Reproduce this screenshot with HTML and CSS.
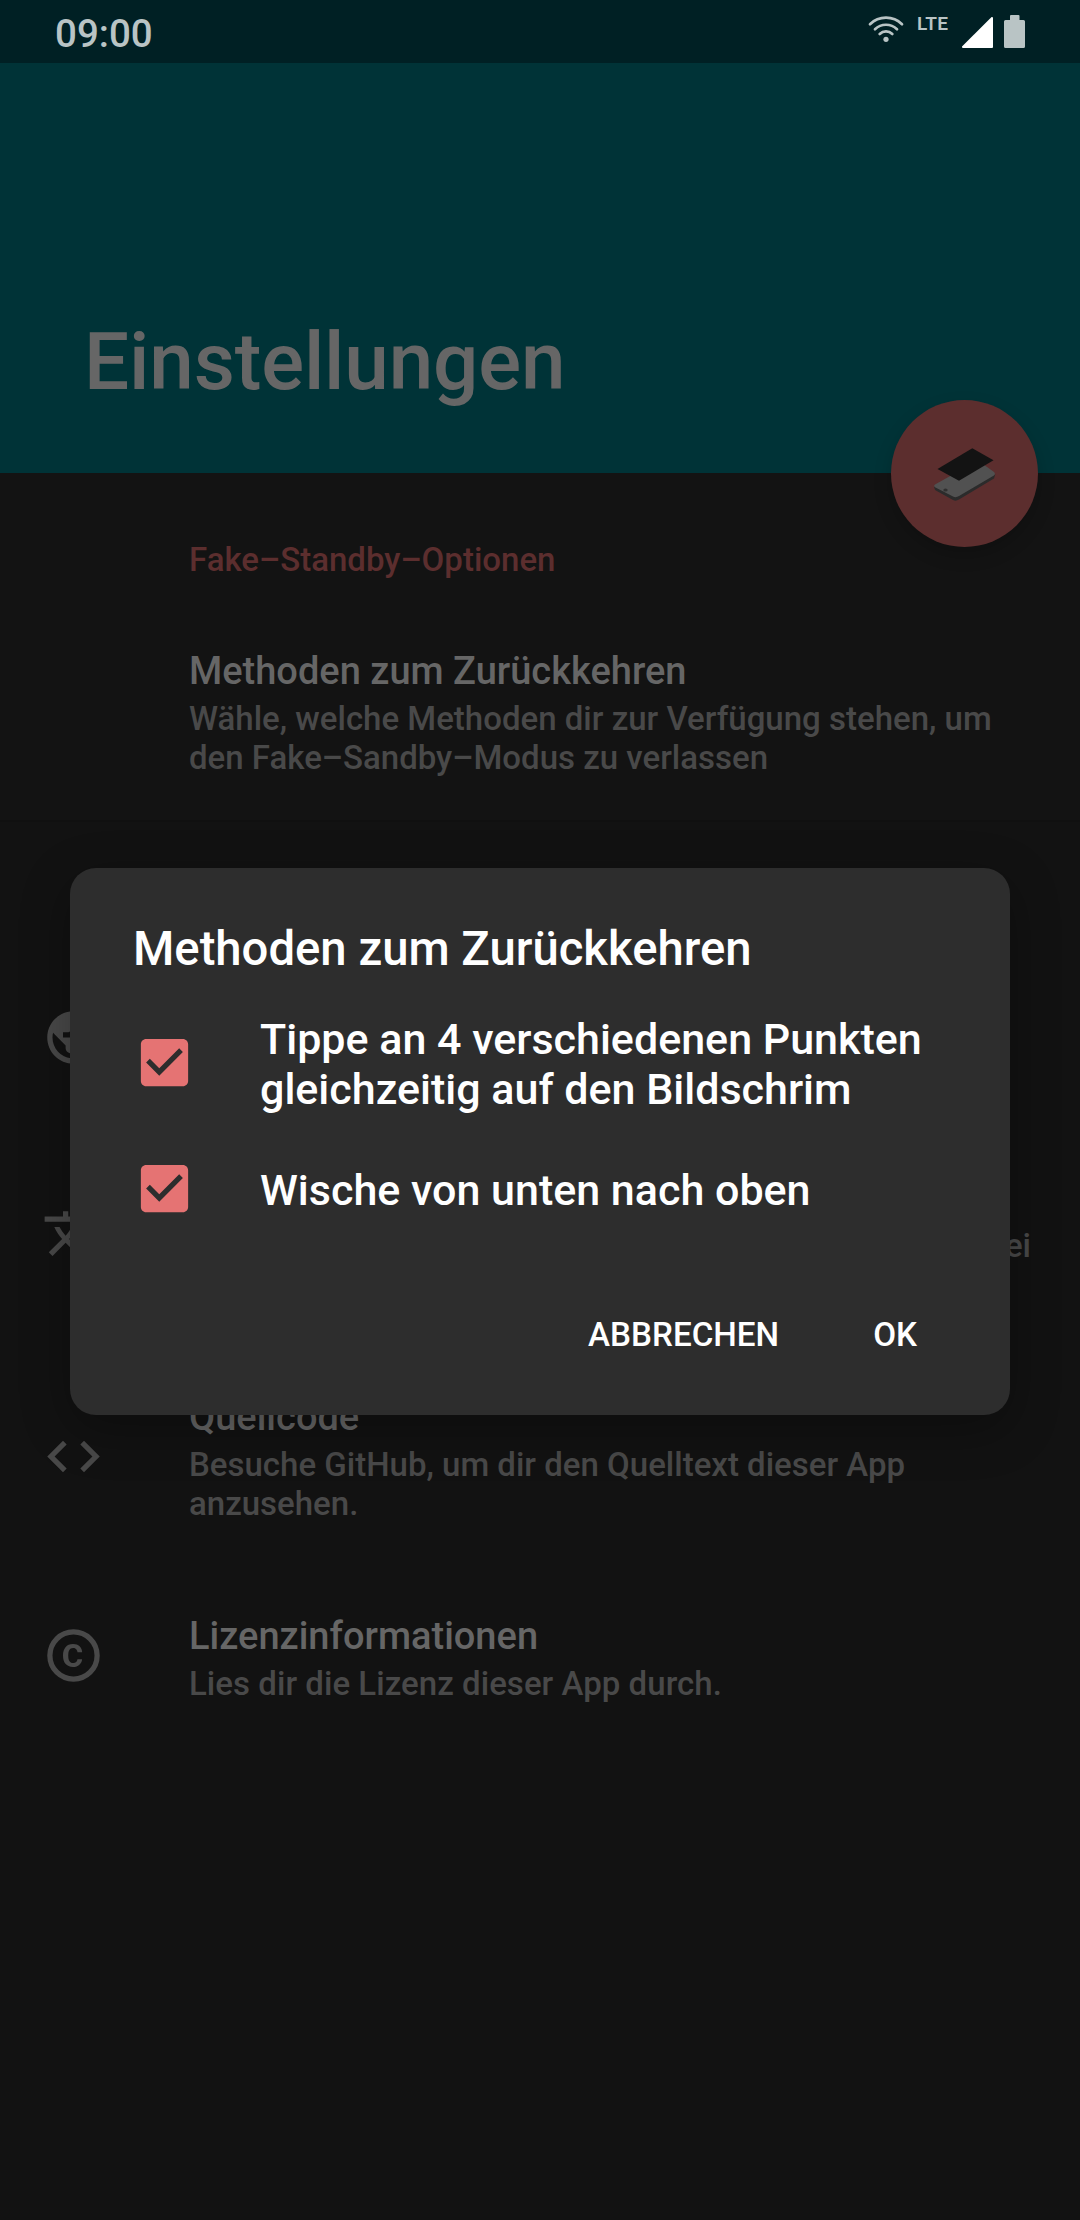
FILE: index.html
```html
<!DOCTYPE html>
<html lang="de">
<head>
<meta charset="utf-8">
<title>Einstellungen</title>
<link rel="stylesheet" href="styles.css">
</head>
<body>
<div class="screen">
  <div class="status-bar">
    <span class="clock">09:00</span>
    <svg class="wifi" width="36" height="28" viewBox="0 0 36 28" fill="none" stroke="#b9c4c5" stroke-width="2.7" stroke-linecap="round">
      <path d="M2 9.2A23 23 0 0 1 34 9.2M7 14.2A15.8 15.8 0 0 1 29 14.2M11.7 19A9 9 0 0 1 24.3 19"/>
      <circle cx="18" cy="24.3" r="2.6" fill="#b9c4c5" stroke="none"/>
    </svg>
    <span class="network">LTE</span>
    <svg class="signal" width="31" height="31" viewBox="0 0 31 31"><path d="M29.6 0H30Q31 0 31 1V30Q31 31 30 31H1Q0 31 0 30V29.4Z" fill="#fff"/></svg>
    <svg class="battery" width="21" height="33" viewBox="0 0 21 33"><path d="M7 0H14.5Q15.5 0 15.5 1V5H19.5Q21 5 21 6.500V31.500Q21 33 19.500 33H1.500Q0 33 0 31.500V6.500Q0 5 1.500 5H6V1Q6 0 7 0Z" fill="#b9c4c5"/></svg>
  </div>

  <header class="app-header">
    <h1 class="page-title">Einstellungen</h1>
    <div class="fab">
      <svg width="147" height="147" viewBox="0 0 147 147">
        <path d="M43 86.500L44 90L62 100Q65 101.500 68 99.500L103 78.500L104.300 74L65 96Z" fill="#2b2b2b"/>
        <path d="M44 84.500L87 60.500L103 72Q105 74 102.500 75.800L68 96Q65 98 62 96.500L44.500 87.500Q42 86 44 84.500Z" fill="#515151"/>
        <ellipse cx="54.500" cy="90" rx="2.200" ry="1.500" fill="#303030"/>
        <path d="M46.500 69L81.300 48.300L102.500 60.300L68 80.700Z" fill="#131313"/>
      </svg>
    </div>
  </header>

  <main class="settings">
    <section class="group group-main">
      <h2 class="category">Fake–Standby–Optionen</h2>
      <div class="row row-methods">
        <div class="row-icon"></div>
        <div class="row-text">
          <div class="row-title">Methoden zum Zurückkehren</div>
          <div class="row-summary">Wähle, welche Methoden dir zur Verfügung stehen, um<br>den Fake–Sandby–Modus zu verlassen</div>
        </div>
      </div>
    </section>
    <section class="group group-about">
      <div class="row row-web">
        <div class="row-icon"><svg class="icon" viewBox="0 0 24 24"><path d="M12 2C6.480 2 2 6.480 2 12s4.480 10 10 10 10-4.480 10-10S17.520 2 12 2zm-1 17.930c-3.950-.490-7-3.850-7-7.930 0-.620.080-1.210.210-1.790L9 15v1c0 1.100.900 2 2 2v1.930zm6.900-2.540c-.260-.810-1-1.390-1.900-1.390h-1v-3c0-.550-.450-1-1-1H8v-2h2c.550 0 1-.450 1-1V7h2c1.100 0 2-.900 2-2v-.410c2.930 1.190 5 4.060 5 7.410 0 2.080-.800 3.970-2.100 5.390z"/></svg></div>
      </div>
      <div class="row row-tall">
        <div class="row-icon"><svg class="icon" viewBox="0 0 24 24"><path d="M12.870 15.070l-2.540-2.510.030-.030c1.740-1.940 2.980-4.170 3.710-6.530H17V4h-7V2H8v2H1v1.990h11.170C11.500 7.920 10.440 9.750 9 11.350 8.070 10.320 7.300 9.190 6.690 8h-2c.730 1.630 1.730 3.170 2.980 4.560l-5.090 5.020L4 19l5-5 3.110 3.110.760-2.040zM18.500 10h-2L12 22h2l1.120-3h4.750L21 22h2l-4.500-12zm-2.620 7l1.620-4.330L19.120 17h-3.240z"/></svg></div>
        <div class="row-text row-text-end"><div class="row-summary">ei</div></div>
      </div>
      <div class="row row-tall">
        <div class="row-icon"><svg class="icon" viewBox="0 0 24 24"><path d="M9.400 16.600L4.800 12l4.600-4.600L8 6l-6 6 6 6 1.400-1.400zm5.200 0l4.600-4.600-4.600-4.600L16 6l6 6-6 6-1.400-1.400z"/></svg></div>
        <div class="row-text">
          <div class="row-title">Quellcode</div>
          <div class="row-summary">Besuche GitHub, um dir den Quelltext dieser App<br>anzusehen.</div>
        </div>
      </div>
      <div class="row row-license">
        <div class="row-icon"><svg class="icon" viewBox="0 0 24 24"><circle cx="12" cy="12" r="9" fill="none" stroke="#494949" stroke-width="2"/><path d="M10.080 10.860c.050-.330.160-.620.300-.870s.340-.460.590-.620c.240-.150.540-.220.910-.230.230.010.440.050.630.130.200.090.380.210.520.360s.250.330.340.530.130.420.140.640h1.790c-.020-.470-.110-.900-.280-1.290s-.400-.730-.700-1.010-.660-.500-1.080-.660-.880-.230-1.390-.230c-.650 0-1.220.110-1.700.340s-.880.530-1.200.920-.560.840-.710 1.360S8 11.290 8 11.870v.270c0 .580.080 1.120.230 1.640s.390.970.710 1.350.720.690 1.200.910 1.050.340 1.700.340c.470 0 .910-.080 1.320-.230s.770-.360 1.080-.630.560-.580.740-.940.290-.740.300-1.150h-1.790c-.010.210-.060.400-.150.580s-.210.330-.360.460-.320.230-.520.300c-.190.070-.390.090-.600.100-.360-.010-.660-.080-.890-.230-.250-.160-.450-.370-.590-.620s-.250-.550-.300-.880-.080-.670-.080-1v-.270c0-.350.030-.680.080-1.010z"/></svg></div>
        <div class="row-text">
          <div class="row-title">Lizenzinformationen</div>
          <div class="row-summary">Lies dir die Lizenz dieser App durch.</div>
        </div>
      </div>
    </section>
  </main>

  <div class="overlay">
    <div class="dialog">
      <h2 class="dialog-title">Methoden zum Zurückkehren</h2>
      <div class="option">
        <svg class="checkbox" viewBox="0 0 24 24"><path d="M19 3H5c-1.110 0-2 .900-2 2v14c0 1.100.890 2 2 2h14c1.110 0 2-.900 2-2V5c0-1.100-.890-2-2-2zm-9 14l-5-5 1.410-1.410L10 14.170l7.590-7.590L19 8l-9 9z"/></svg>
        <span class="option-label">Tippe an 4 verschiedenen Punkten<br>gleichzeitig auf den Bildschrim</span>
      </div>
      <div class="option">
        <svg class="checkbox" viewBox="0 0 24 24"><path d="M19 3H5c-1.110 0-2 .900-2 2v14c0 1.100.890 2 2 2h14c1.110 0 2-.900 2-2V5c0-1.100-.890-2-2-2zm-9 14l-5-5 1.410-1.410L10 14.170l7.590-7.590L19 8l-9 9z"/></svg>
        <span class="option-label">Wische von unten nach oben</span>
      </div>
      <div class="actions">
        <span class="action">ABBRECHEN</span>
        <span class="action">OK</span>
      </div>
    </div>
  </div>
</div>
</body>
</html>
```
FILE: styles.css
```css
* { box-sizing: border-box; }
body {
  margin: 0;
  background: #121212;
  font-family: Roboto, "Noto Sans", sans-serif;
  font-weight: 500;
}
h1, h2 { margin: 0; font-weight: 500; }
svg { display: block; flex: none; }

.screen {
  position: relative;
  width: 1080px;
  height: 2220px;
  overflow: hidden;
  display: flex;
  flex-direction: column;
  background: #121212;
}

.status-bar {
  height: 63px;
  flex: none;
  display: flex;
  align-items: flex-start;
  padding: 0 55px;
  background: #002024;
  color: #b9c4c5;
}
.clock { font-size: 38.5px; line-height: 46px; margin-top: 11px; margin-right: auto; }
.wifi { margin-top: 15px; }
.network { font-size: 19px; font-weight: 600; letter-spacing: .3px; line-height: 22px; margin: 13px 0 0 13px; width: 32px; }
.signal { margin: 17px 0 0 13px; }
.battery { margin: 15px 0 0 11px; }

.app-header {
  position: relative;
  height: 410px;
  flex: none;
  display: flex;
  align-items: flex-end;
  padding: 0 84px 64px;
  background: #003337;
}
.page-title { font-size: 80px; line-height: 94px; letter-spacing: -.15px; color: #666; }
.fab {
  position: absolute;
  z-index: 1;
  right: 42px;
  bottom: -74px;
  width: 147px;
  height: 147px;
  border-radius: 50%;
  background: #5c2e2e;
  box-shadow: 0 8px 18px rgba(0, 0, 0, .18);
}

.category {
  height: 133px;
  padding: 67px 0 0 189px;
  font-size: 33px;
  line-height: 39px;
  color: #5c2e2e;
}
.group-main { background: #131313; border-bottom: 2px solid #101010; height: 349px; }
.group-about { padding-top: 127px; }
.row { display: flex; align-items: center; padding-left: 42px; }
.row-methods { height: 214px; }
.row-web { height: 182px; }
.row-tall { height: 219px; }
.row-license { height: 178px; }
.row-icon { width: 147px; flex: none; margin-bottom: 6px; }
.icon { width: 63px; height: 63px; fill: #494949; }
.row-title { font-size: 38px; line-height: 45px; color: #666; }
.row-summary { font-size: 33px; line-height: 39px; margin-top: 5px; color: #494949; white-space: nowrap; }
.group-about .row-text { margin-bottom: 2px; }
.group-about .row-license .row-text { margin-bottom: 0; }
.row-license .row-summary { letter-spacing: .04px; }
.group-about .row-text-end { margin: 5px 0 0 auto; padding-right: 49px; }

.overlay {
  position: absolute;
  inset: 63px 0 0;
  display: flex;
  align-items: center;
  justify-content: center;
  z-index: 2;
}
.dialog {
  width: 940px;
  height: 547px;
  padding: 54px 63px 0;
  border-radius: 26px;
  background: #2d2d2d;
  color: #fff;
  box-shadow: 0 14px 50px rgba(0, 0, 0, .3);
}
.dialog-title { font-size: 47.25px; line-height: 54px; margin-bottom: 23px; }
.option { display: flex; align-items: center; height: 126px; }
.checkbox { width: 63px; height: 63px; fill: #e57373; margin-right: 64px; }
.option-label { font-size: 43px; line-height: 50px; padding-top: 4px; white-space: nowrap; }
.actions { display: flex; justify-content: flex-end; gap: 94px; padding: 64px 30px 0 0; }
.action { font-size: 33.2px; line-height: 39px; }
```
